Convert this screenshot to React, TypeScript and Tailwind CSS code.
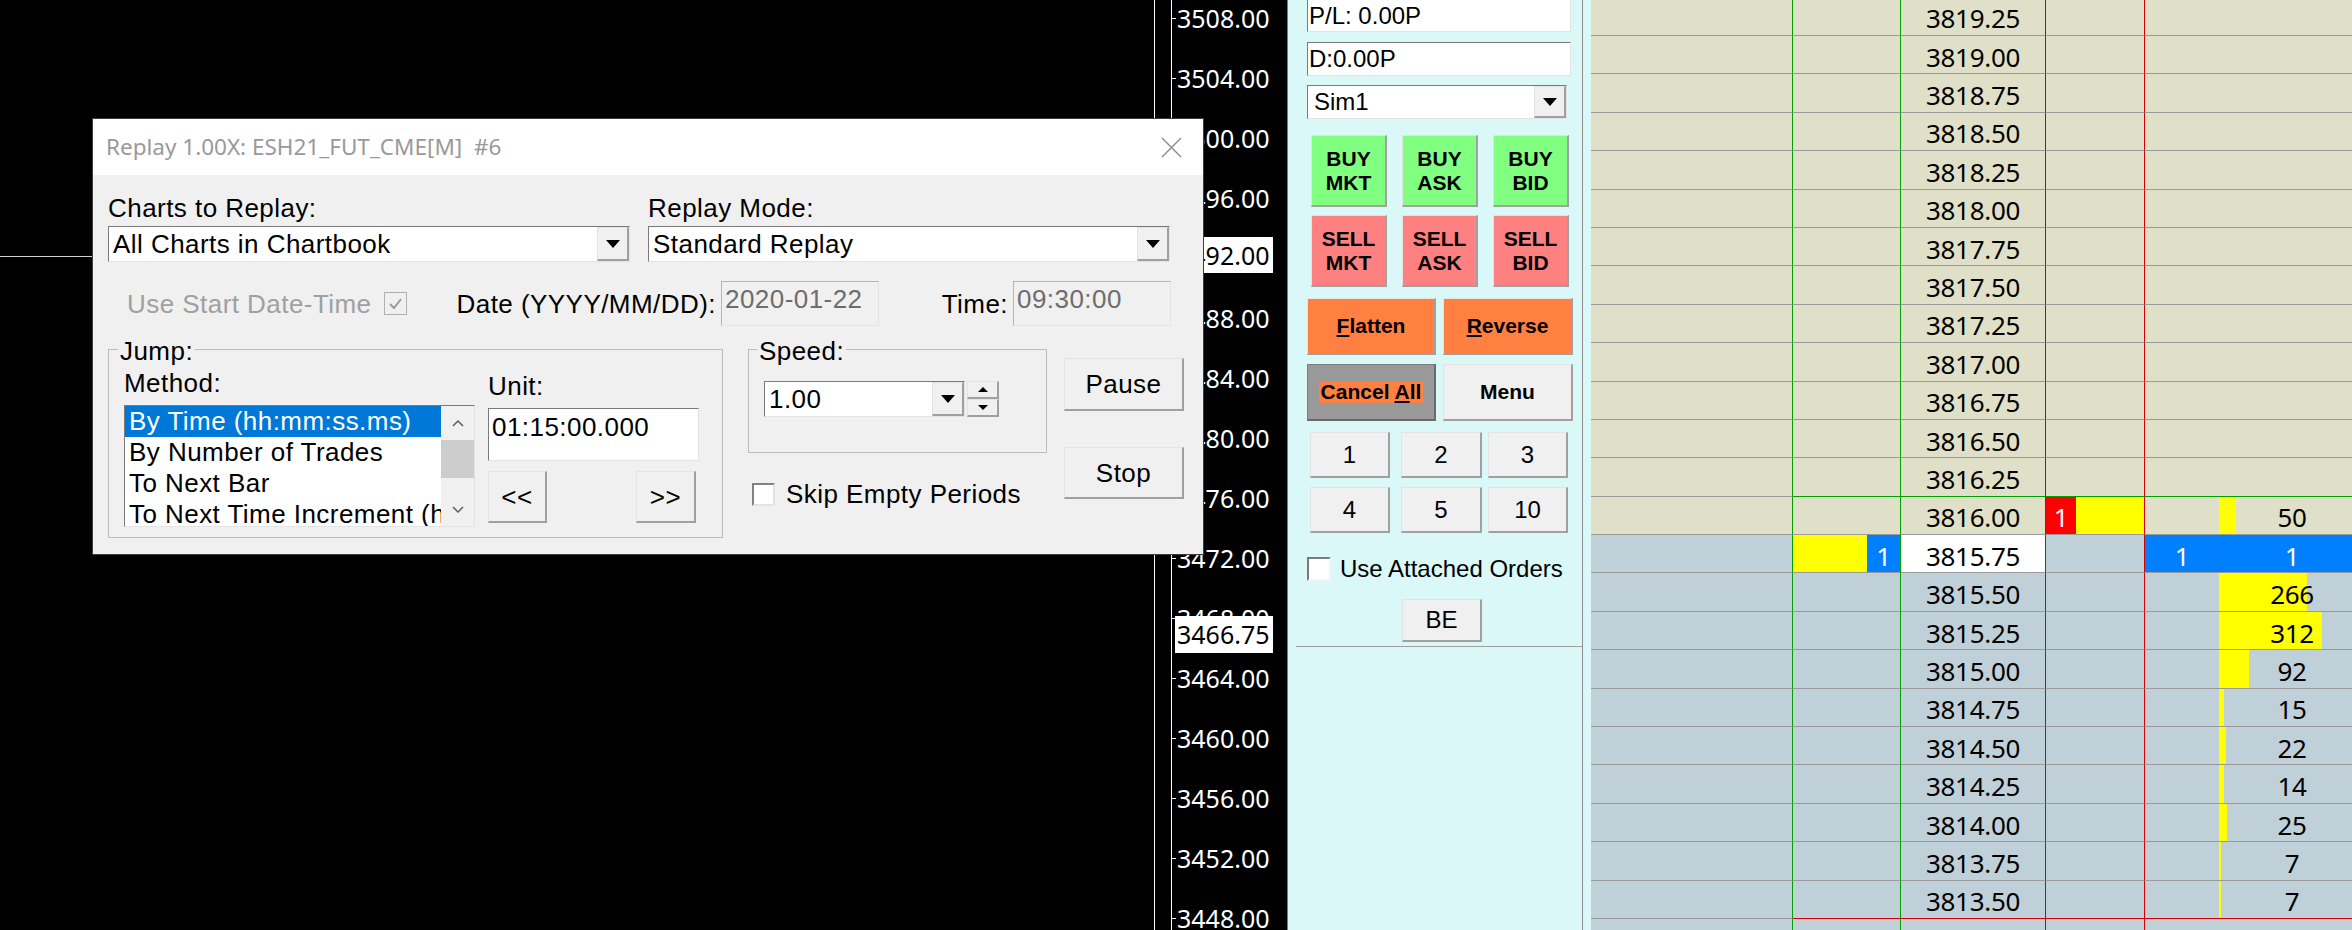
import React from "react";

const raisedEdge =
  "border border-t-[#e3e3e3] border-l-[#e3e3e3] border-r-2 border-b-2 border-r-[#a0a0a0] border-b-[#a0a0a0]";
const raised = `bg-[#f0f0f0] ${raisedEdge}`;
const sunken =
  "border border-t-[#7a7a7a] border-l-[#7a7a7a] border-r-[#e3e3e3] border-b-[#e3e3e3]";

function Arrow({ w = 14, h = 8 }: { w?: number; h?: number }) {
  return (
    <svg width={w} height={h} viewBox={`0 0 ${w} ${h}`}>
      <polygon points={`0,0 ${w},0 ${w / 2},${h}`} fill="#000" />
    </svg>
  );
}

function Combo({ text, className }: { text: string; className: string }) {
  return (
    <div className={`flex bg-white ${sunken} ${className}`}>
      <div className="flex flex-1 items-center overflow-hidden whitespace-nowrap pl-[4px] leading-none">{text}</div>
      <div className={`flex w-[32px] items-center justify-center ${raised}`}>
        <Arrow />
      </div>
    </div>
  );
}

function Chart() {
  const labels = Array.from({ length: 16 }, (_, i) => (3508 - 4 * i).toFixed(2));
  return (
    <div className="flex h-full w-[1288px] shrink-0 border-r border-[#7a7a7a] bg-black">
      <div className="relative h-full w-[1171px]">
        <div className="absolute left-0 top-[256px] h-px w-full bg-[#d0d0d0]" />
        <div className="absolute left-[1154px] top-0 h-full w-px bg-white" />
      </div>
      <div className="relative h-full w-[116px] border-l border-white font-['Noto_Sans',sans-serif] text-[25px] text-white">
        <div className="-mt-[12px] flex flex-col">
          {labels.map((l) => (
            <div key={l} className="flex h-[60px] items-center">
              <div className="h-px w-[4px] bg-white" />
              <span className="ml-[1px] leading-none">{l}</span>
            </div>
          ))}
        </div>
        <div className="absolute left-[3px] top-[237px] flex h-[36px] w-[98px] items-center bg-white pl-[2px] leading-none text-black">
          3492.00
        </div>
        <div className="absolute left-[3px] top-[616px] flex h-[37px] w-[98px] items-center bg-white pl-[2px] leading-none text-black">
          3466.75
        </div>
      </div>
    </div>
  );
}

function TradePanel() {
  const buys = [
    ["BUY", "MKT"],
    ["BUY", "ASK"],
    ["BUY", "BID"],
  ];
  const sells = [
    ["SELL", "MKT"],
    ["SELL", "ASK"],
    ["SELL", "BID"],
  ];
  return (
    <div className="h-full w-[295px] shrink-0 border-r border-[#8c8c8c] bg-[#dbf8f8] text-[24px] text-black">
      <div className="ml-[8px] flex flex-col border-b border-[#a0a0a0] pb-[4px] pl-[11px]">
        <div className="flex h-[32px] w-[264px] items-center border-b border-l border-r border-l-[#7a7a7a] border-r-[#e3e3e3] border-b-[#e3e3e3] bg-white pl-[1px] leading-none">
          P/L: 0.00P
        </div>
        <div className={`mt-[10px] flex h-[34px] w-[264px] items-center bg-white pl-[1px] leading-none ${sunken}`}>
          D:0.00P
        </div>
        <Combo text="Sim1" className="mt-[9px] h-[34px] w-[260px] pl-[2px]" />

        <div className="ml-[4px] mt-[16px] flex h-[72px] gap-[15px]">
          {buys.map(([a, b]) => (
            <div key={b} className={`flex w-[76px] flex-col items-center justify-center bg-[#80ff80] text-[21px] font-bold leading-[24px] ${raisedEdge}`}>
              <span>{a}</span>
              <span>{b}</span>
            </div>
          ))}
        </div>
        <div className="ml-[4px] mt-[8px] flex h-[72px] gap-[15px]">
          {sells.map(([a, b]) => (
            <div key={b} className={`flex w-[76px] flex-col items-center justify-center bg-[#ff8080] text-[21px] font-bold leading-[24px] ${raisedEdge}`}>
              <span>{a}</span>
              <span>{b}</span>
            </div>
          ))}
        </div>

        <div className="mt-[11px] flex h-[57px] gap-[7px] text-[21px] font-bold">
          <div className={`flex w-[129px] items-center justify-center bg-[#ff8040] ${raisedEdge}`}>
            <span>
              <span className="underline">F</span>latten
            </span>
          </div>
          <div className={`flex w-[130px] items-center justify-center bg-[#ff8040] ${raisedEdge}`}>
            <span>
              <span className="underline">R</span>everse
            </span>
          </div>
        </div>
        <div className="mt-[9px] flex h-[57px] gap-[7px] text-[21px] font-bold">
          <div className="flex w-[129px] items-center justify-center border border-[#7c7c7c] border-r-2 border-b-2 border-r-[#6a6a6a] border-b-[#6a6a6a] bg-[#999999]">
            <span className="bg-[#ff8040] px-[2px] leading-[22px]">
              Cancel <span className="underline">A</span>ll
            </span>
          </div>
          <div className={`flex w-[130px] items-center justify-center ${raised}`}>Menu</div>
        </div>

        <div className="ml-[3px] mt-[11px] flex h-[46px]">
          <div className={`flex w-[80px] items-center justify-center ${raised}`}>1</div>
          <div className={`ml-[11px] flex w-[81px] items-center justify-center ${raised}`}>2</div>
          <div className={`ml-[6px] flex w-[80px] items-center justify-center ${raised}`}>3</div>
        </div>
        <div className="ml-[3px] mt-[9px] flex h-[46px]">
          <div className={`flex w-[80px] items-center justify-center ${raised}`}>4</div>
          <div className={`ml-[11px] flex w-[81px] items-center justify-center ${raised}`}>5</div>
          <div className={`ml-[6px] flex w-[80px] items-center justify-center ${raised}`}>10</div>
        </div>

        <div className="mt-[24px] flex h-[24px] items-center">
          <div className="h-[24px] w-[24px] border-2 border-t-[#7a7a7a] border-l-[#7a7a7a] border-r-[#f4f4f4] border-b-[#f4f4f4] bg-white" />
          <span className="ml-[9px] leading-none">Use Attached Orders</span>
        </div>
        <div className={`ml-[95px] mt-[18px] flex h-[43px] w-[80px] items-center justify-center ${raised}`}>BE</div>
      </div>
    </div>
  );
}

const volumes: Record<number, number> = {
  13: 50,
  15: 266,
  16: 312,
  17: 92,
  18: 15,
  19: 22,
  20: 14,
  21: 25,
  22: 7,
  23: 7,
};

function DomRow({ i }: { i: number }) {
  const price = (3819.25 - 0.25 * i).toFixed(2);
  const bg = i <= 13 ? "bg-[#e0e0c8]" : "bg-[#c0d0d8]";
  const line = i === 12 ? "border-b-[#00a000]" : i === 23 ? "border-b-[#d40000]" : "border-b-[#9a9a9a]";
  const vol = volumes[i];
  return (
    <div className={`flex h-[38.4px] shrink-0 ${bg}`}>
      <div className="w-[202px] border-b border-r border-r-[#00a000] border-b-[#9a9a9a]" />
      <div className={`flex w-[108px] border-b border-r border-r-[#00a000] ${line}`}>
        {i === 14 && (
          <>
            <div className="flex-1 bg-[#ffff00]" />
            <div className="flex w-[33px] items-center justify-center bg-[#0080ff] pt-[5px] text-white">1</div>
          </>
        )}
      </div>
      <div className={`flex w-[145px] items-center justify-center border-b border-r border-r-[#d40000] pt-[5px] ${line} ${i === 14 ? "bg-white" : ""}`}>
        {price}
      </div>
      <div className={`flex w-[99px] border-b border-r border-r-[#d40000] ${line}`}>
        {i === 13 && (
          <>
            <div className="flex w-[30px] items-center justify-center bg-[#ff0000] pt-[5px] text-white">1</div>
            <div className="flex-1 bg-[#ffff00]" />
          </>
        )}
      </div>
      <div className={`flex w-[295px] border-b ${line} ${i === 14 ? "bg-[#0080ff] text-white" : ""}`}>
        <div className="flex w-[74px] items-center justify-center pt-[5px]">{i === 14 ? "1" : ""}</div>
        <div className="relative flex flex-1">
          {vol !== undefined && (
            <div className="absolute inset-y-0 left-0 bg-[#ffff00]" style={{ width: `${vol * 0.33}px` }} />
          )}
          <div className="relative flex w-[146px] items-center justify-center pt-[5px]">
            {i === 14 ? "1" : vol ?? ""}
          </div>
        </div>
      </div>
    </div>
  );
}

function Dom() {
  return (
    <div className="h-full w-[849px] shrink-0 font-['Noto_Sans',sans-serif] text-[26px] tracking-[-0.3px] text-black">
      <div className="-mt-[2.4px] flex flex-col">
        {Array.from({ length: 25 }, (_, i) => (
          <DomRow key={i} i={i} />
        ))}
      </div>
    </div>
  );
}

function ListBox() {
  const items = ["By Time (hh:mm:ss.ms)", "By Number of Trades", "To Next Bar", "To Next Time Increment (hh:mm:ss)"];
  return (
    <div className={`mt-[9px] flex h-[122px] w-[351px] bg-white ${sunken}`}>
      <div className="flex-1 overflow-hidden">
        {items.map((t, i) => (
          <div key={t} className={`h-[31px] whitespace-nowrap pl-[4px] leading-[31px] ${i === 0 ? "bg-[#0078d7] text-white" : ""}`}>
            {t}
          </div>
        ))}
      </div>
      <div className="flex w-[33px] flex-col bg-[#f0f0f0]">
        <div className="flex h-[34px] items-center justify-center">
          <svg width="12" height="7" viewBox="0 0 12 7">
            <polyline points="1,6 6,1 11,6" fill="none" stroke="#606060" strokeWidth="1.5" />
          </svg>
        </div>
        <div className="h-[38px] bg-[#cdcdcd]" />
        <div className="flex-1" />
        <div className="flex h-[34px] items-center justify-center">
          <svg width="12" height="7" viewBox="0 0 12 7">
            <polyline points="1,1 6,6 11,1" fill="none" stroke="#606060" strokeWidth="1.5" />
          </svg>
        </div>
      </div>
    </div>
  );
}

const disabledField =
  "border border-t-[#b4b4b4] border-l-[#b4b4b4] border-r-[#e3e3e3] border-b-[#e3e3e3] bg-[#f0f0f0]";

function ReplayDialog() {
  return (
    <div className="absolute left-[92px] top-[118px] flex h-[437px] w-[1112px] flex-col border border-[#3c3c3c] bg-[#f0f0f0] text-[26px] tracking-[0.45px] text-black">
      <div className="flex h-[56px] shrink-0 items-center justify-between bg-white pl-[13px] pr-[21px]">
        <span className="whitespace-pre font-['Noto_Sans',sans-serif] text-[22.5px] tracking-normal text-[#999999]">
          Replay 1.00X: ESH21_FUT_CME[M]  #6
        </span>
        <svg width="21" height="21" viewBox="0 0 21 21">
          <path d="M1 1 L20 20 M20 1 L1 20" stroke="#8a8a8a" strokeWidth="1.4" />
        </svg>
      </div>

      <div className="flex flex-col pl-[15px] pt-[20px]">
        <div className="flex gap-[18px]">
          <div className="flex w-[522px] flex-col">
            <span className="leading-none">Charts to Replay:</span>
            <Combo text="All Charts in Chartbook" className="mt-[5px] h-[36px]" />
          </div>
          <div className="flex w-[522px] flex-col">
            <span className="leading-none">Replay Mode:</span>
            <Combo text="Standard Replay" className="mt-[5px] h-[36px]" />
          </div>
        </div>

        <div className="mt-[19px] flex h-[45px] items-center leading-none">
          <div className="flex w-[299px] items-center">
            <span className="flex-1 pl-[19px] text-[#a0a0a0]">Use Start Date-Time</span>
            <div className="flex h-[23px] w-[23px] items-center justify-center border border-[#b0b0b0] bg-[#f0f0f0]">
              <svg width="15" height="13" viewBox="0 0 15 13">
                <polyline points="2,7 6,11 13,2" fill="none" stroke="#9a9a9a" strokeWidth="2" />
              </svg>
            </div>
          </div>
          <span className="w-[309px] text-right">Date (YYYY/MM/DD):</span>
          <div className={`ml-[5px] h-[45px] w-[158px] pl-[3px] pt-[4px] text-[#6d6d6d] ${disabledField}`}>2020-01-22</div>
          <span className="w-[129px] text-right">Time:</span>
          <div className={`ml-[5px] h-[45px] w-[158px] pl-[3px] pt-[4px] text-[#6d6d6d] ${disabledField}`}>09:30:00</div>
        </div>

        <div className="mt-[8px] flex items-start">
          <fieldset className="h-[204px] w-[615px] border border-[#bcbcbc] pl-[15px]">
            <legend className="-ml-[6px] px-[2px] pt-[4px] leading-none">Jump:</legend>
            <div className="mt-[6px] flex">
              <div className="flex w-[351px] flex-col">
                <span className="leading-none">Method:</span>
                <ListBox />
              </div>
              <div className="ml-[13px] flex w-[211px] flex-col pt-[3px]">
                <span className="leading-none">Unit:</span>
                <div className={`mt-[9px] h-[53px] bg-white pl-[3px] pt-[5px] leading-none ${sunken}`}>01:15:00.000</div>
                <div className="mt-[10px] flex h-[52px]">
                  <button className={`w-[59px] leading-none ${raised}`}>&lt;&lt;</button>
                  <button className={`ml-auto mr-[3px] w-[60px] leading-none ${raised}`}>&gt;&gt;</button>
                </div>
              </div>
            </div>
          </fieldset>

          <div className="ml-[25px] flex w-[299px] flex-col">
            <fieldset className="h-[119px] border border-[#bcbcbc] pl-[15px]">
              <legend className="-ml-[7px] px-[2px] pt-[4px] leading-none">Speed:</legend>
              <div className="mt-[17px] flex">
                <Combo text="1.00" className="h-[36px] w-[201px]" />
                <div className="ml-[2px] flex w-[32px] flex-col">
                  <div className={`flex h-[18px] items-center justify-center ${raised}`}>
                    <svg width="10" height="5" viewBox="0 0 10 5">
                      <polygon points="0,5 10,5 5,0" fill="#000" />
                    </svg>
                  </div>
                  <div className={`flex h-[18px] items-center justify-center ${raised}`}>
                    <Arrow w={10} h={5} />
                  </div>
                </div>
              </div>
            </fieldset>
            <div className="mt-[28px] flex items-center pl-[4px]">
              <div className="h-[23px] w-[23px] border-2 border-t-[#828282] border-l-[#828282] border-r-[#e3e3e3] border-b-[#e3e3e3] bg-white" />
              <span className="ml-[11px] leading-none">Skip Empty Periods</span>
            </div>
          </div>

          <div className="ml-[17px] flex w-[120px] flex-col">
            <button className={`mt-[24px] h-[53px] leading-none ${raised}`}>Pause</button>
            <button className={`mt-[36px] h-[52px] leading-none ${raised}`}>Stop</button>
          </div>
        </div>
      </div>
    </div>
  );
}

export default function App() {
  return (
    <div className="relative flex h-[930px] w-[2352px] overflow-hidden bg-black font-['Liberation_Sans',Arial,sans-serif]">
      <Chart />
      <TradePanel />
      <div className="h-full w-[8px] shrink-0 bg-[#dbf8f8]" />
      <Dom />
      <ReplayDialog />
    </div>
  );
}
